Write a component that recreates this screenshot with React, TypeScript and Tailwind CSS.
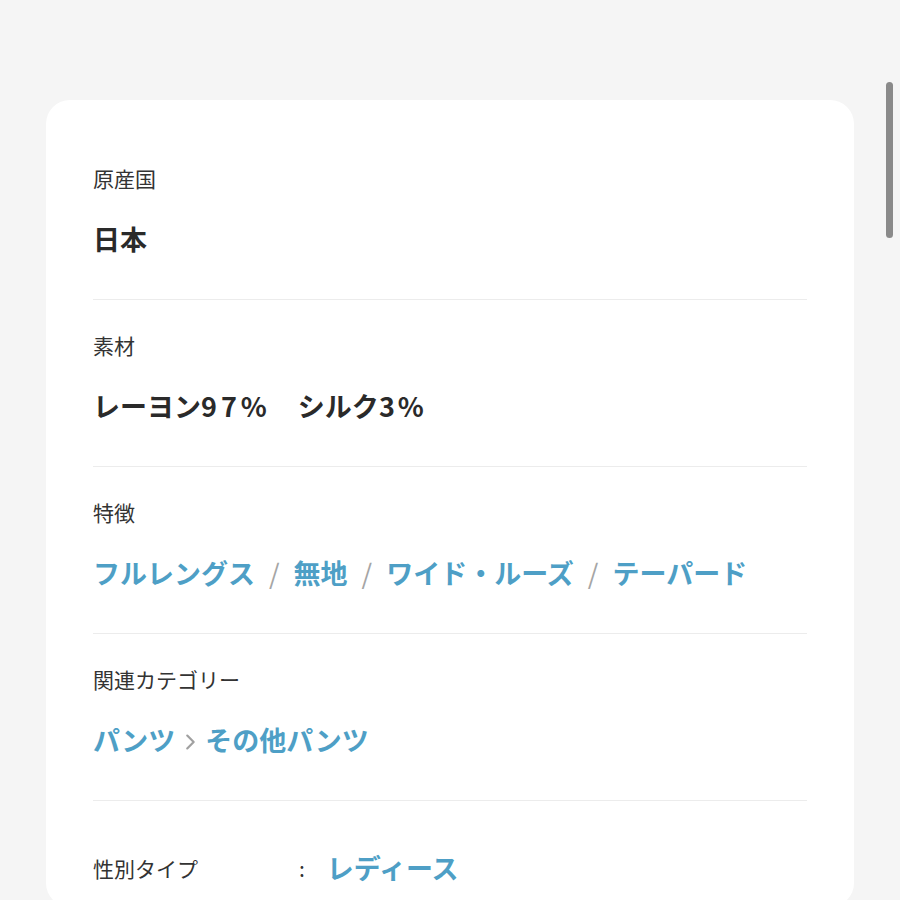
const font = { fontFamily: '"Noto Sans CJK JP", "Noto Sans", sans-serif' };

type Row = {
  label: string;
  body: React.ReactNode;
};

function Slash() {
  return <span className="mx-[14px] font-normal text-[#a5a5a5]">/</span>;
}

function Link({ children }: { children: React.ReactNode }) {
  return <span className="text-[#4e9fc6]">{children}</span>;
}

const rows: Row[] = [
  { label: "原産国", body: <span className="text-[#2a2a2a]">日本</span> },
  {
    label: "素材",
    body: (
      <span className="text-[#2a2a2a] whitespace-pre">
        レーヨン<span className="tracking-[4px]">97%</span>　シルク<span className="tracking-[3px]">3%</span>
      </span>
    ),
  },
  {
    label: "特徴",
    body: (
      <>
        <Link>フルレングス</Link>
        <Slash />
        <Link>無地</Link>
        <Slash />
        <Link>ワイド・ルーズ</Link>
        <Slash />
        <Link>テーパード</Link>
      </>
    ),
  },
  {
    label: "関連カテゴリー",
    body: (
      <>
        <Link>パンツ</Link>
        <svg
          viewBox="0 0 24 24"
          className="mx-[4px] inline-block h-[22px] w-[22px] align-[-2px]"
          fill="none"
          stroke="#a0a0a0"
          strokeWidth={2.4}
          strokeLinecap="round"
          strokeLinejoin="round"
        >
          <path d="M9 5l7 7-7 7" />
        </svg>
        <Link>その他パンツ</Link>
      </>
    ),
  },
];

export default function App() {
  return (
    <div className="relative min-h-[900px] bg-[#f5f5f5] pt-[100px]" style={font}>
      <div className="ml-[46px] w-[808px] rounded-[24px] bg-white px-[47px] pt-[33px] pb-[20px]">
        {rows.map((row) => (
          <div key={row.label} className="border-b border-[#ececec] pt-[30px] pb-[41px]">
            <div className="text-[21px] leading-[30px] text-[#333]">{row.label}</div>
            <div className="mt-[26px] text-[27px] font-bold leading-[39px]">{row.body}</div>
          </div>
        ))}
        <div className="flex items-center pt-[47px]">
          <span className="w-[206px] text-[21px] leading-[30px] text-[#333]">性別タイプ</span>
          <span className="text-[21px] leading-[30px] text-[#333]">:</span>
          <span className="ml-[22px] text-[27px] font-bold leading-[39px] text-[#4e9fc6]">
            レディース
          </span>
        </div>
      </div>
      <div className="absolute left-[886px] top-[82px] h-[156px] w-[7px] rounded-full bg-[#8a8a8a]" />
    </div>
  );
}
